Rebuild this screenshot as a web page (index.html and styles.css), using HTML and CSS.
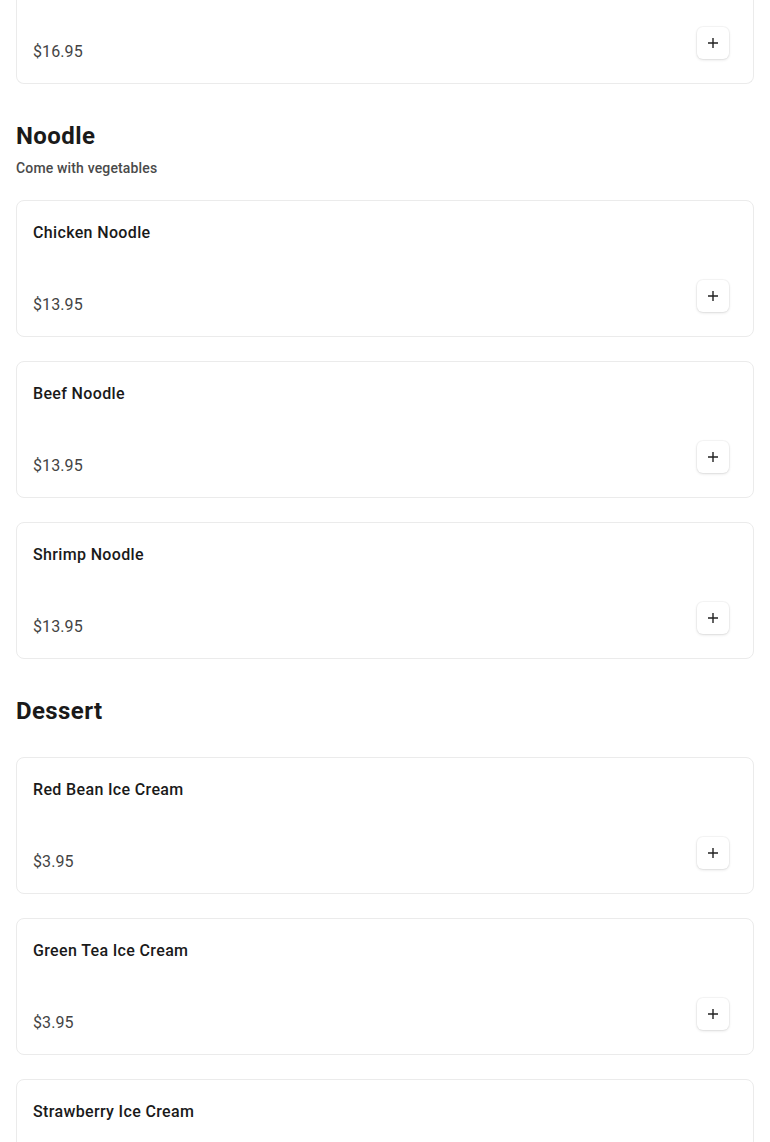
FILE: index.html
```html
<!DOCTYPE html>
<html lang="en">
<head>
    <meta charset="UTF-8">
    <meta name="viewport" content="width=device-width, initial-scale=1.0">
    <title>Menu</title>
    <link rel="stylesheet" href="styles.css">
</head>
<body>
    <div class="menu">
        <div class="item-list">
            <div class="item-card clipped">
                <div class="item-footer">
                    <span class="item-price">$16.95</span>
                    <button class="add-btn" aria-label="Add">
                        <svg width="12" height="12" viewBox="0 0 12 12"><path d="M6 1v10M1 6h10"/></svg>
                    </button>
                </div>
            </div>
        </div>

        <section class="menu-section">
            <div class="section-head">
                <h2>Noodle</h2>
                <p class="section-note">Come with vegetables</p>
            </div>
            <div class="item-list">
                <div class="item-card">
                    <h3 class="item-name">Chicken Noodle</h3>
                    <div class="item-footer">
                        <span class="item-price">$13.95</span>
                        <button class="add-btn" aria-label="Add">
                            <svg width="12" height="12" viewBox="0 0 12 12"><path d="M6 1v10M1 6h10"/></svg>
                        </button>
                    </div>
                </div>
                <div class="item-card">
                    <h3 class="item-name">Beef Noodle</h3>
                    <div class="item-footer">
                        <span class="item-price">$13.95</span>
                        <button class="add-btn" aria-label="Add">
                            <svg width="12" height="12" viewBox="0 0 12 12"><path d="M6 1v10M1 6h10"/></svg>
                        </button>
                    </div>
                </div>
                <div class="item-card">
                    <h3 class="item-name">Shrimp Noodle</h3>
                    <div class="item-footer">
                        <span class="item-price">$13.95</span>
                        <button class="add-btn" aria-label="Add">
                            <svg width="12" height="12" viewBox="0 0 12 12"><path d="M6 1v10M1 6h10"/></svg>
                        </button>
                    </div>
                </div>
            </div>
        </section>

        <section class="menu-section">
            <div class="section-head no-note">
                <h2>Dessert</h2>
            </div>
            <div class="item-list">
                <div class="item-card">
                    <h3 class="item-name">Red Bean Ice Cream</h3>
                    <div class="item-footer">
                        <span class="item-price">$3.95</span>
                        <button class="add-btn" aria-label="Add">
                            <svg width="12" height="12" viewBox="0 0 12 12"><path d="M6 1v10M1 6h10"/></svg>
                        </button>
                    </div>
                </div>
                <div class="item-card">
                    <h3 class="item-name">Green Tea Ice Cream</h3>
                    <div class="item-footer">
                        <span class="item-price">$3.95</span>
                        <button class="add-btn" aria-label="Add">
                            <svg width="12" height="12" viewBox="0 0 12 12"><path d="M6 1v10M1 6h10"/></svg>
                        </button>
                    </div>
                </div>
                <div class="item-card">
                    <h3 class="item-name">Strawberry Ice Cream</h3>
                    <div class="item-footer">
                        <span class="item-price">$3.95</span>
                        <button class="add-btn" aria-label="Add">
                            <svg width="12" height="12" viewBox="0 0 12 12"><path d="M6 1v10M1 6h10"/></svg>
                        </button>
                    </div>
                </div>
            </div>
        </section>
    </div>
</body>
</html>
```

FILE: styles.css
```css
body {
    font-family: Roboto, "Liberation Sans", sans-serif;
    margin: 0;
    padding: 0 16px;
    background: #fff;
    color: #1a1a1a;
}
.menu-section {
    margin-top: 36px;
}
.section-head {
    padding-bottom: 22px;
}
.section-head.no-note {
    padding-bottom: 30px;
}
.section-head h2 {
    margin: 0;
    font-size: 24px;
    line-height: 32px;
    font-weight: 700;
    letter-spacing: 0.4px;
    color: #1a1a1a;
}
.section-note {
    margin: 6px 0 0;
    font-size: 14px;
    line-height: 20px;
    font-weight: 500;
    letter-spacing: 0.15px;
    color: #4a4a4a;
}
.item-list {
    display: flex;
    flex-direction: column;
    gap: 24px;
}
.item-card {
    border: 1px solid #ebebeb;
    border-radius: 8px;
    padding: 20px 24px 21px 16px;
    background: #fff;
}
.item-card.clipped {
    border-top: none;
    border-radius: 0 0 8px 8px;
    padding-top: 27px;
}
.item-name {
    margin: 0;
    font-size: 16px;
    line-height: 24px;
    font-weight: 500;
    letter-spacing: 0.35px;
    color: #1a1a1a;
}
.item-footer {
    display: flex;
    justify-content: space-between;
    align-items: flex-start;
    margin-top: 35px;
}
.item-card.clipped .item-footer {
    margin-top: 0;
}
.item-price {
    margin-top: 15px;
    font-size: 16px;
    line-height: 20px;
    letter-spacing: 0.1px;
    color: #444;
}
.add-btn {
    width: 32px;
    height: 32px;
    padding: 0;
    border: none;
    border-radius: 6px;
    background: #fff;
    box-shadow: 0 1px 3px rgba(0, 0, 0, 0.12), 0 0 0 1px rgba(0, 0, 0, 0.03);
    display: flex;
    align-items: center;
    justify-content: center;
    cursor: pointer;
}
.add-btn svg {
    fill: none;
    stroke: #222;
    stroke-width: 1.4;
}
```
